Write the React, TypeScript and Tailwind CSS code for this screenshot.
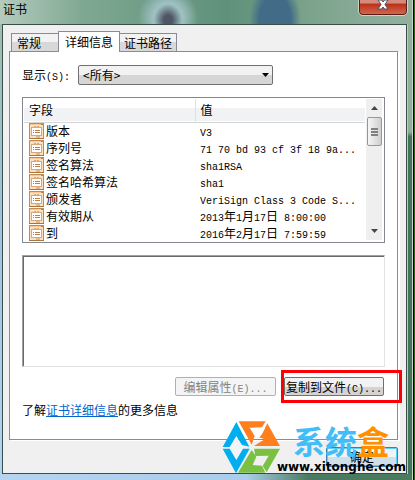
import type { ReactNode } from 'react';

const fields = [
  { name: '版本', value: 'V3' },
  { name: '序列号', value: '71 70 bd 93 cf 3f 18 9a...' },
  { name: '签名算法', value: 'sha1RSA' },
  { name: '签名哈希算法', value: 'sha1' },
  { name: '颁发者', value: 'VeriSign Class 3 Code S...' },
  { name: '有效期从', value: '2013年1月17日 8:00:00' },
  { name: '到', value: '2016年2月17日 7:59:59' },
];

// Latin runs are half the width of a Chinese character
const Mixed = ({ text }: { text: string }) => (
  <>
    {text.split(/([\x20-\x7e]+)/).filter(Boolean).map((part, i) =>
      /^[\x20-\x7e]/.test(part) ? (
        <span key={i} className="font-['Liberation_Mono',monospace] text-[10px] leading-none whitespace-pre">{part}</span>
      ) : (
        <span key={i}>{part}</span>
      )
    )}
  </>
);

const FieldIcon = () => (
  <svg viewBox="0 0 15 16" className="w-[15px] h-4 shrink-0" shapeRendering="crispEdges" aria-hidden="true">
    <rect width="15" height="16" rx="1" fill="#c08a58" />
    <rect x="1" y="1" width="13" height="14" fill="#fbe0c2" />
    <rect x="1" y="1" width="11" height="1" fill="#fdc992" />
    <rect x="12" y="1" width="2" height="1" fill="#b9814d" />
    <rect x="2" y="4" width="11" height="9" fill="#d9a878" />
    <rect x="3" y="5" width="9" height="7" fill="#fff" />
    <rect x="5" y="3" width="2" height="2" fill="#d9a878" />
    <rect x="8" y="3" width="2" height="2" fill="#d9a878" />
    <path d="M4 7h1v1H4zM6 7h5v1H6zM4 9h1v1H4zM6 9h5v1H6z" fill="#b9814d" />
    <rect x="7" y="13" width="4" height="2" fill="#e4b78a" />
    <rect y="15" width="15" height="1" fill="#a8743f" />
  </svg>
);

const Tab = ({ active, children }: { active?: boolean; children: ReactNode }) => (
  <button
    role="tab"
    aria-selected={!!active}
    className={
      active
        ? 'relative h-[21px] -mb-px px-1.5 pb-px border border-b-0 border-[#898c95] bg-white leading-[18px]'
        : 'h-[18px] px-[5px] border border-b-0 border-[#898c95] bg-gradient-to-b from-[#f2f2f2] from-50% to-[#d8d8d8] to-50% leading-[18px] first:border-r-0 first:pr-[17px] last:border-l-0 last:px-1'
    }
  >
    {children}
  </button>
);

const Scrollbar = () => (
  <div className="w-4 m-px mr-0.5 flex flex-col items-center bg-[#efefef]">
    <button aria-label="向上滚动" className="h-[18px] w-full flex items-center justify-center">
      <svg viewBox="0 0 7 4" className="w-[7px] h-1"><path d="M0 4L3.5 0 7 4z" fill="#444" /></svg>
    </button>
    <div className="w-[15px] h-[29px] rounded-xs border border-[#979797] bg-gradient-to-r from-[#f6f6f6] to-[#cfcfd0] flex flex-col items-center justify-center gap-px">
      <span className="w-[7px] h-0.5 bg-[#808080]"></span>
      <span className="w-[7px] h-0.5 bg-[#808080]"></span>
      <span className="w-[7px] h-0.5 bg-[#808080]"></span>
    </div>
    <button aria-label="向下滚动" className="mt-auto h-[18px] w-full flex items-center justify-center">
      <svg viewBox="0 0 7 4" className="w-[7px] h-1"><path d="M0 0L3.5 4 7 0z" fill="#444" /></svg>
    </button>
  </div>
);

const FieldList = () => (
  <div className="flex border border-[#828790] bg-white pb-px">
    <table className="flex-1 ml-px mt-px border-collapse table-fixed text-left">
      <thead>
        <tr className="h-[23px] bg-gradient-to-b from-white from-40% to-[#f1f2f4] to-40% border-b border-[#d5d5d5]">
          <th className="w-[171px] py-0 px-[5px] font-normal border-r border-[#dfe0e1]">字段</th>
          <th className="py-0 px-[5px] font-normal">值</th>
        </tr>
      </thead>
      <tbody>
        {fields.map((field) => (
          <tr key={field.name} className="h-[17px] leading-4">
            <td className="py-0 pl-[5px]">
              <div className="flex items-center gap-0.5"><FieldIcon />{field.name}</div>
            </td>
            <td className="py-0 pl-[5px] whitespace-nowrap"><Mixed text={field.value} /></td>
          </tr>
        ))}
      </tbody>
    </table>
    <Scrollbar />
  </div>
);

const Watermark = () => (
  <div className="absolute right-2 bottom-1 w-[185px] h-14 pointer-events-none">
    <svg viewBox="36 46 177 162" className="absolute left-0 top-0 w-[59px] h-[54px]" aria-hidden="true">
      <path d="M78 94L101 129L79 168L58 129Z" fill="#f2f4f6" />
      <path d="M79 52L38 127H59L79 94L96 121L118 126Z" fill="#00aeef" />
      <path d="M38 132H59L79 166L99 132H119L78 206Z" fill="#00aeef" />
      <path d="M86 50H167L156 68L119 69L134 94L125 120Z" fill="#ff7f1e" />
      <path d="M172 56L210 124H132L164 104L145 97L155 90Z" fill="#ff7f1e" />
      <path d="M122 70H165L149 98L134 92L139 80Z" fill="#fff" />
      <path d="M132 132H210L170 203L158 184L176 153L136 154Z" fill="#7ac143" />
      <path d="M125 136L139 156L128 181L156 183L166 204H84Z" fill="#7ac143" />
    </svg>
    <p className="absolute right-[18px] top-1 text-[32px] leading-8 font-bold text-[#43bdf7] whitespace-nowrap">
      系统<span className="text-[#ff9100]">盒</span>
    </p>
    <p className="absolute right-px bottom-px font-['DejaVu_Sans',sans-serif] text-[12px] leading-4 font-bold whitespace-nowrap">
      www.xitonghe.com
    </p>
  </div>
);

export default function App() {
  return (
    <div className="relative min-h-screen flex overflow-hidden bg-[#08230c] font-['Noto_Sans_CJK_SC',sans-serif] text-xs text-black">
      <div className="flex-1 flex flex-col border-r border-[#c5d8cd]">
        <header className="h-6 pl-[3px] pr-[5px] flex justify-between items-start bg-[radial-gradient(ellipse_14px_16px_at_168px_20px,#4e5563_30%,transparent),radial-gradient(ellipse_30px_30px_at_168px_18px,#9dc0c2_50%,transparent),radial-gradient(ellipse_26px_40px_at_275px_20px,#416b86_60%,transparent),linear-gradient(to_right,#b5cbbd,#7fa892_20%,#5f917a_55%,#7ca38c_75%,#93b09f)]">
          <h1 className="leading-[18px]">证书</h1>
          <button
            aria-label="关闭"
            className="w-12 h-[15px] rounded-b border border-t-0 border-[#5a1c14] outline outline-white/50 bg-gradient-to-b from-[#d58b7b] from-20% via-[#b9301a] via-30% to-[#d2664a] flex justify-center"
          >
            <svg viewBox="0 0 12 10" className="w-3 h-2.5" aria-hidden="true">
              <path d="M1 0H4.5L6 2L7.5 0H11L8 4.5L11 9H7.5L6 7L4.5 9H1L4 4.5Z" fill="#fff" stroke="#4b5068" />
            </svg>
          </button>
        </header>
        <div className="flex-1 flex">
          <div className="w-0.5 bg-gradient-to-b from-[#9fbcae] via-[#9fc4e8] to-[#b3d3f0]"></div>
          <main className="flex-1 flex flex-col pl-1.5 pr-2 py-1.5 border border-[#3b4f49] bg-[#f0f0f0]">
            <div role="tablist" className="flex items-end pl-0.5 h-5">
              <Tab>常规</Tab>
              <Tab active>详细信息</Tab>
              <Tab>证书路径</Tab>
            </div>
            <section className="flex-1 border border-[#898c95] shadow-[2px_1px_0_#fff] bg-white px-3 pt-[13px] pb-5">
              <div className="flex items-center gap-2 mb-3">
                <label htmlFor="show" className="w-12 whitespace-nowrap">显示<Mixed text="(S):" /></label>
                <div className="relative w-[195px]">
                  <select
                    id="show"
                    className="block w-full h-5 pl-1 appearance-none rounded-xs border border-[#707070] bg-gradient-to-b from-[#f2f2f2] from-50% to-[#d6d6d6] to-50%"
                  >
                    <option>&lt;所有&gt;</option>
                  </select>
                  <svg viewBox="0 0 7 4" className="absolute right-1 top-2 w-[7px] h-1 pointer-events-none" aria-hidden="true">
                    <path d="M0 0H7L3.5 4z" />
                  </svg>
                </div>
              </div>
              <FieldList />
              <textarea
                aria-label="字段值"
                readOnly
                className="block w-full h-28 mt-3 resize-none border border-t-[#a0a0a0] border-l-[#a0a0a0] border-r-[#e3e3e3] border-b-[#e3e3e3] bg-white shadow-[inset_1px_1px_0_#696969]"
              />
              <div className="flex justify-end gap-2 mt-2.5 pr-px">
                <button disabled className="w-[101px] h-[19px] rounded-xs border border-[#adb2b5] bg-[#f4f4f4] leading-4 text-[#838383] whitespace-nowrap">
                  编辑属性<Mixed text="(E)..." />
                </button>
                <div className="relative">
                  <button className="w-[100px] h-[19px] rounded-xs border border-[#707070] bg-gradient-to-b from-[#f2f2f2] from-50% to-[#d3d3d3] to-50% leading-4 whitespace-nowrap">
                    复制到文件<Mixed text="(C)..." />
                  </button>
                  <div className="absolute -left-[3px] -right-[18px] -top-[7px] -bottom-[7px] border-3 border-[#fb0007] pointer-events-none"></div>
                </div>
              </div>
              <p className="mt-1.5 leading-4">
                了解<a href="#details" className="text-[#0066cc] underline">证书详细信息</a>的更多信息
              </p>
            </section>
            <div className="flex justify-end mt-[7px]">
              <button className="w-[72px] h-5 rounded-xs border border-[#3c7fb1] ring-1 ring-inset ring-[#5fd0f5] bg-gradient-to-b from-[#eef5f9] from-50% to-[#cfe0ea] to-50% leading-4">
                确定
              </button>
            </div>
          </main>
          <div className="w-[5px] border-l border-[#b6cdc0] bg-gradient-to-b from-[#8fae9c] from-24% to-[#44745b] to-25%"></div>
        </div>
        <footer className="h-1.5 bg-gradient-to-r from-[#b5d4f2] via-[#a9cdea] via-60% to-[#4a7a60] to-75%"></footer>
      </div>
      <div className="w-0.5 border-l border-black bg-[#2c6a1a]"></div>
      <Watermark />
    </div>
  );
}
